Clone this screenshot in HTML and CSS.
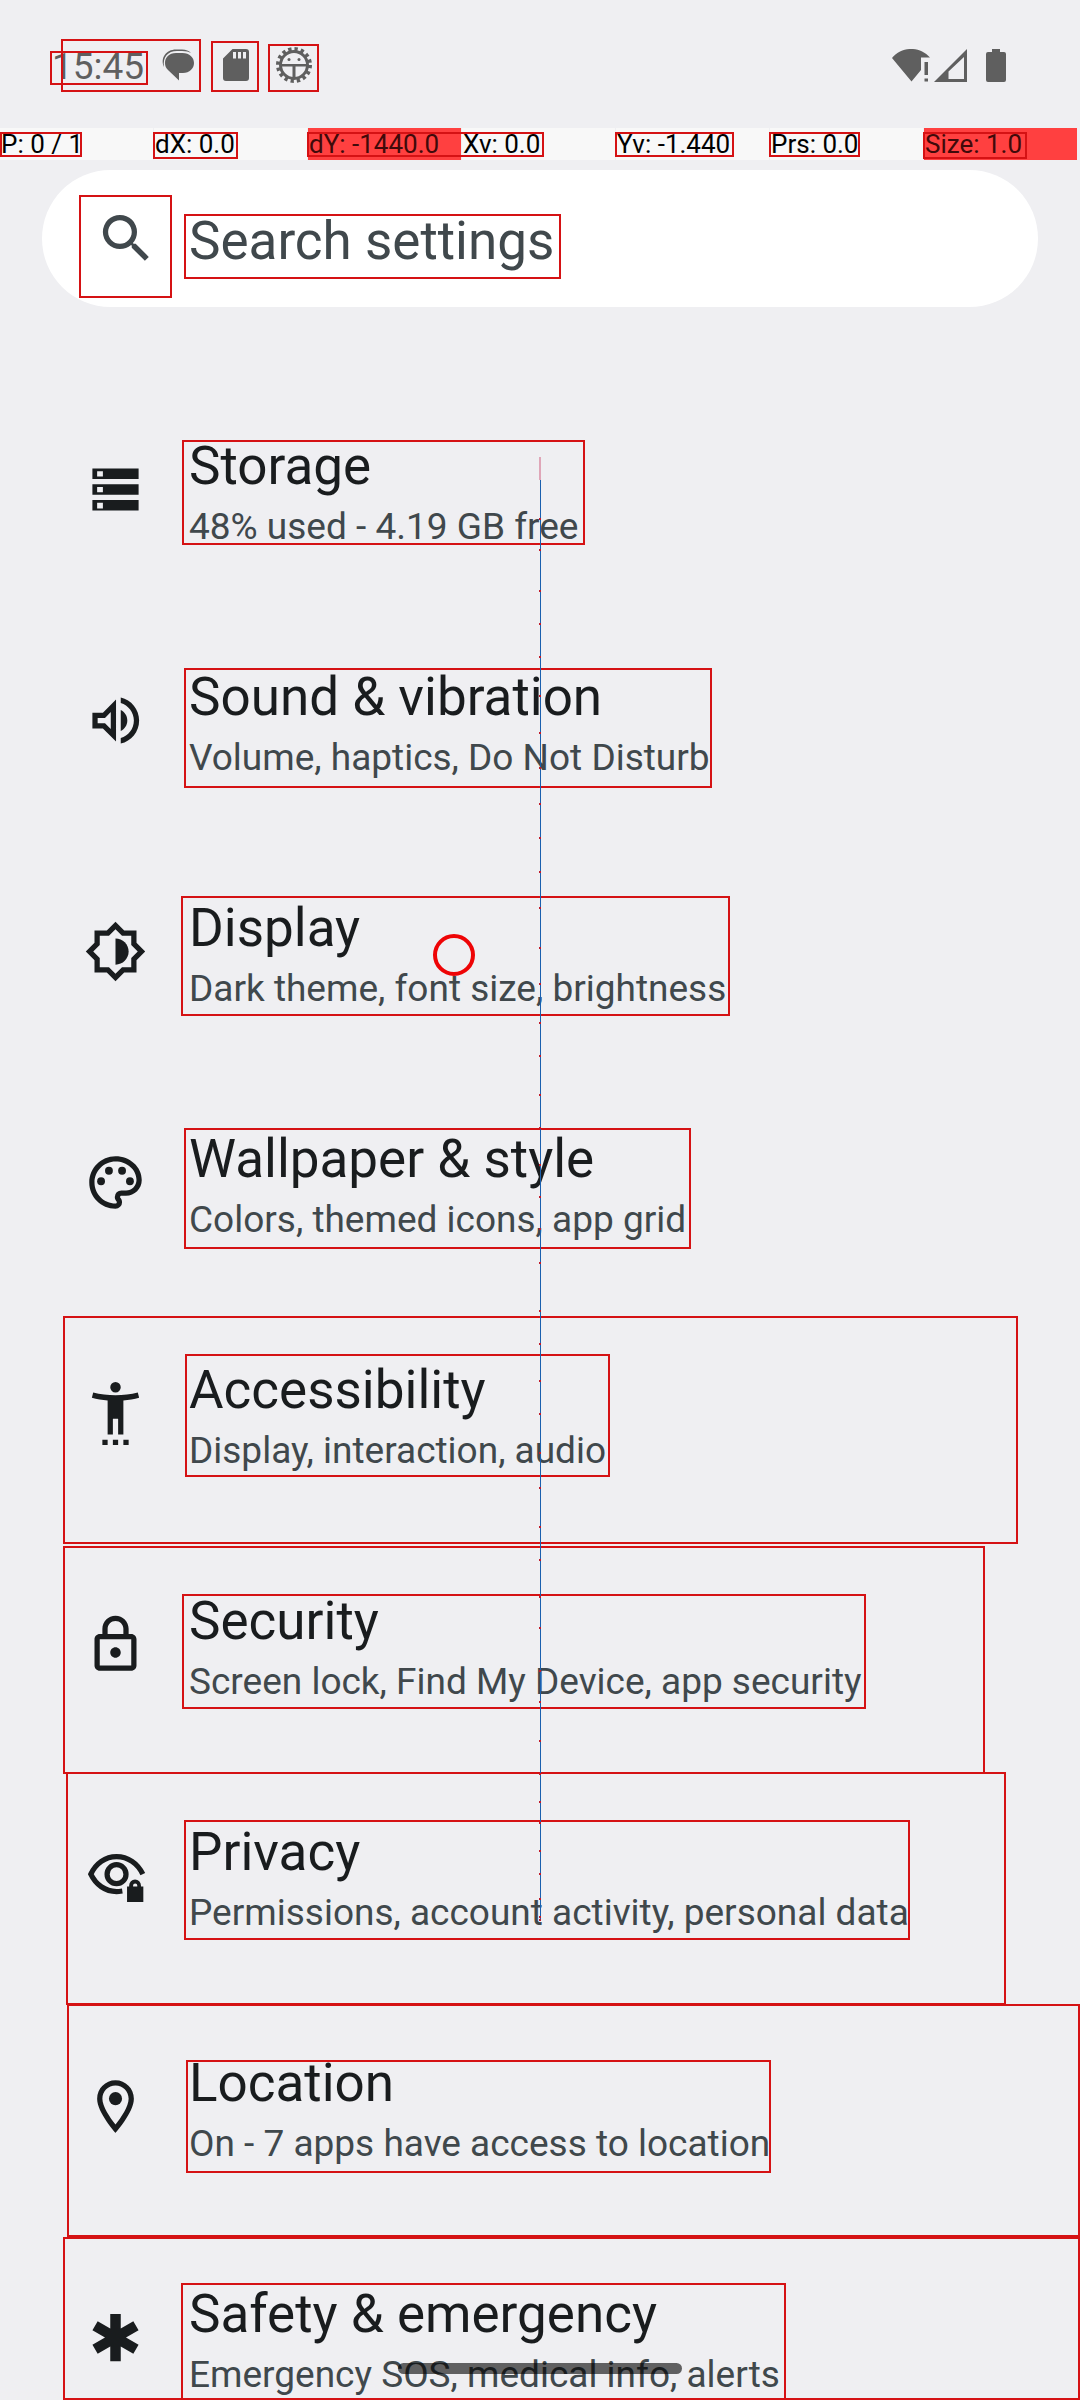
FILE: index.html
```html
<!DOCTYPE html>
<html lang="en">
<head>
<meta charset="utf-8">
<meta name="viewport" content="width=device-width, initial-scale=1">
<title>Settings</title>
<link rel="stylesheet" href="styles.css">
</head>
<body>
<div class="screen">
  <header class="status">
    <div class="status-group status-left">
      <time class="clock">15:45</time>
      <svg class="notice" viewBox="0 0 48 48" aria-hidden="true"><path d="M10 26C6 17 12 8.500 22 8.500h6c4 0 7 1.500 9 3.500-2-1.200-5-2-9-2h-5c-9 0-14.500 6-13 16z"/><path d="M22 12h6.500c7 0 11.500 4.500 11.500 10s-4.500 10-11 10h-4v7.500L14 29c-2-1.800-3-4-3-7 0-5.500 4-10 11-10z"/></svg>
      <svg class="notice" viewBox="0 0 48 48" aria-hidden="true"><path fill-rule="evenodd" d="M20.500 8H34q3 0 3 3v26q0 3-3 3H14q-3 0-3-3V17.500zM21 11v6.500h3V11zm5 0v6.500h3V11zm5 0v6.500h3V11z"/></svg>
      <svg class="notice" viewBox="0 0 48 48" aria-hidden="true"><circle class="teeth" cx="24" cy="24" r="16"/><circle class="ring" cx="24" cy="24" r="13.500"/><path d="M12 23h24v2.500H12zM22.500 24h3v13h-3z"/><circle cx="19" cy="18.500" r="1.500"/><circle cx="29" cy="18.500" r="1.500"/></svg>
    </div>
    <div class="status-group">
      <svg class="wifi" viewBox="0 0 38 33" aria-hidden="true"><path d="M0 9C10-3 28-3 38 8.500H29V21L19.500 32.500zM32.500 13h3.500v13h-3.500zM32.500 29.500h3.500v3h-3.500z"/></svg>
      <svg class="signal" viewBox="0 0 33 33" aria-hidden="true"><path fill-rule="evenodd" d="M0 33 33 0v33zM14.500 30H30V8L14.500 22.500z"/></svg>
      <svg class="battery" viewBox="0 0 20 33" aria-hidden="true"><path d="M6 0h8v3h4q2 0 2 2v26q0 2-2 2H2q-2 0-2-2V5q0-2 2-2h4z"/></svg>
    </div>
  </header>

  <div class="pointer-bar">
    <span>P: 0 / 1</span>
    <span>dX: 0.0</span>
    <span class="hot">dY: -1440.0</span>
    <span>Xv: 0.0</span>
    <span>Yv: -1.440</span>
    <span>Prs: 0.0</span>
    <span class="hot">Size: 1.0</span>
  </div>

  <main class="content">
    <label class="search">
      <svg class="icon" viewBox="0 0 24 24" aria-hidden="true"><path d="M15.500 14h-.79l-.28-.27A6.471 6.471 0 0 0 16 9.500 6.500 6.500 0 1 0 9.500 16c1.610 0 3.090-.59 4.230-1.570l.27.28v.79l5 4.990L20.490 19l-4.990-5zm-6 0C7.010 14 5 11.990 5 9.500S7.010 5 9.500 5 14 7.010 14 9.500 11.990 14 9.500 14z"/></svg>
      <input class="search-input" type="text" placeholder="Search settings" aria-label="Search settings">
    </label>

    <nav class="list">
      <a class="row" href="#storage">
        <svg class="icon" viewBox="0 0 24 24" aria-hidden="true"><path fill-rule="evenodd" d="M3.200 20h17.600v-4H3.200zM5 17h2.200v2.200H5zM3.200 4v4h17.600V4zM7.200 7H5V5h2.200zM3.200 14h17.600v-4H3.200zM5 11h2.200v2H5z"/></svg>
        <span class="text"><span class="title">Storage</span><span class="summary">48% used - 4.19 GB free</span></span>
      </a>
      <a class="row" href="#sound">
        <svg class="icon" viewBox="0 0 24 24" aria-hidden="true"><path fill-rule="evenodd" d="M3.200 9v6h4l5 5V4l-5 5zM10.200 8.800v6.400L8 13H5.200v-2H8z"/><path d="M14 8v8c1.500-.7 2.500-2.200 2.500-4S15.500 8.700 14 8zM14 3.200v2.100c2.900.9 5 3.500 5 6.700s-2.100 5.800-5 6.700v2.100c4-.9 7-4.500 7-8.800s-3-7.900-7-8.800z"/></svg>
        <span class="text"><span class="title">Sound &amp; vibration</span><span class="summary">Volume, haptics, Do Not Disturb</span></span>
      </a>
      <a class="row" href="#display">
        <svg class="icon" viewBox="0 0 24 24" aria-hidden="true"><path fill-rule="evenodd" d="M20 8.690V4h-4.690L12 .69 8.690 4H4v4.690L.69 12 4 15.310V20h4.690L12 23.310 15.310 20H20v-4.690L23.310 12zm-2 5.790V18h-3.520L12 20.480 9.520 18H6v-3.520L3.520 12 6 9.520V6h3.520L12 3.520 14.480 6H18v3.520L20.480 12z"/><path d="M12 7v10c2.760 0 5-2.240 5-5s-2.240-5-5-5z"/></svg>
        <span class="text"><span class="title">Display</span><span class="summary">Dark theme, font size, brightness</span></span>
      </a>
      <a class="row" href="#wallpaper">
        <svg class="icon" viewBox="0 0 24 24" aria-hidden="true"><path d="M12 22C6.490 22 2 17.510 2 12S6.490 2 12 2s10 4.040 10 9c0 3.310-2.690 6-6 6h-1.770c-.28 0-.5.22-.5.5 0 .12.05.23.13.33.41.47.64 1.060.64 1.670A2.500 2.500 0 0 1 12 22zm0-18c-4.410 0-8 3.590-8 8s3.590 8 8 8c.28 0 .5-.22.5-.5a.54.54 0 0 0-.14-.35c-.41-.46-.63-1.050-.63-1.650a2.500 2.500 0 0 1 2.500-2.500H16c2.210 0 4-1.790 4-4 0-3.860-3.590-7-8-7z"/><circle cx="6.500" cy="11.500" r="1.500"/><circle cx="9.500" cy="7.500" r="1.500"/><circle cx="14.500" cy="7.500" r="1.500"/><circle cx="17.500" cy="11.500" r="1.500"/></svg>
        <span class="text"><span class="title">Wallpaper &amp; style</span><span class="summary">Colors, themed icons, app grid</span></span>
      </a>
      <a class="row" href="#accessibility">
        <svg class="icon" viewBox="0 0 24 24" aria-hidden="true"><path d="M20.500 4c-2.610.7-5.670 1-8.500 1s-5.890-.3-8.500-1L3 6c1.860.5 4 .83 6 1v13h2v-6h2v6h2V7c2-.17 4.140-.5 6-1zM12 4a2 2 0 1 0 0-4 2 2 0 0 0 0 4zM7 24h2v-2H7zM11 24h2v-2h-2zM15 24h2v-2h-2z"/></svg>
        <span class="text"><span class="title">Accessibility</span><span class="summary">Display, interaction, audio</span></span>
      </a>
      <a class="row" href="#security">
        <svg class="icon" viewBox="0 0 24 24" aria-hidden="true"><path d="M18 8h-1V6c0-2.760-2.240-5-5-5S7 3.240 7 6v2H6c-1.100 0-2 .9-2 2v10c0 1.100.9 2 2 2h12c1.100 0 2-.9 2-2V10c0-1.100-.9-2-2-2zM9 6c0-1.660 1.340-3 3-3s3 1.340 3 3v2H9zm9 14H6V10h12zm-6-3c1.100 0 2-.9 2-2s-.9-2-2-2-2 .9-2 2 .9 2 2 2z"/></svg>
        <span class="text"><span class="title">Security</span><span class="summary">Screen lock, Find My Device, app security</span></span>
      </a>
      <a class="row" href="#privacy">
        <svg class="icon" viewBox="0 0 24 24" aria-hidden="true"><path class="line" d="M22.400 11.500C20.500 7.400 16.700 4.800 12.400 4.800S4.500 7.400 2.600 11.500c1.900 4 5.500 6.600 9.800 6.600.7 0 1.500-.1 2.200-.2"/><circle class="line" cx="12.400" cy="11.500" r="3.600"/><path fill-rule="evenodd" d="M16.400 16.200h.8v-.4a2.200 2.200 0 0 1 4.500 0v.4h.9v5.900h-6.200zM18.700 16.200h1.600v-.4a.8.800 0 0 0-1.600 0z"/></svg>
        <span class="text"><span class="title">Privacy</span><span class="summary">Permissions, account activity, personal data</span></span>
      </a>
      <a class="row" href="#location">
        <svg class="icon" viewBox="0 0 24 24" aria-hidden="true"><path d="M12 2C8.130 2 5 5.130 5 9c0 5.250 7 13 7 13s7-7.750 7-13c0-3.870-3.130-7-7-7zM7 9c0-2.760 2.240-5 5-5s5 2.240 5 5c0 2.880-2.880 7.190-5 9.880C9.920 16.210 7 11.850 7 9z"/><circle cx="12" cy="9" r="2.500"/></svg>
        <span class="text"><span class="title">Location</span><span class="summary">On - 7 apps have access to location</span></span>
      </a>
      <a class="row" href="#safety">
        <svg class="icon" viewBox="0 0 24 24" aria-hidden="true"><path d="M20.790 9.230l-2-3.460L14 8.540V3h-4v5.540L5.210 5.770l-2 3.460L8 12l-4.790 2.770 2 3.460L10 15.460V21h4v-5.540l4.790 2.770 2-3.460L16 12z"/></svg>
        <span class="text"><span class="title">Safety &amp; emergency</span><span class="summary">Emergency SOS, medical info, alerts</span></span>
      </a>
    </nav>
  </main>

  <div class="home-handle"></div>

  <svg class="overlay" aria-hidden="true">
    <g class="bounds">
      <rect x="51" y="52" width="96" height="32"/>
      <rect x="62" y="40" width="138" height="51"/>
      <rect x="212" y="42" width="46" height="49"/>
      <rect x="269" y="45" width="49" height="46"/>
      <rect x="1" y="133" width="80" height="23"/>
      <rect x="154" y="133" width="83" height="25"/>
      <rect x="308" y="133" width="235" height="23"/>
      <rect x="616" y="133" width="117" height="23"/>
      <rect x="770" y="133" width="89" height="23"/>
      <rect x="924" y="133" width="102" height="25"/>
      <rect x="80" y="196" width="91" height="101"/>
      <rect x="185" y="215" width="375" height="63"/>
      <rect x="183" y="441" width="401" height="103"/>
      <rect x="185" y="669" width="526" height="118"/>
      <rect x="182" y="897" width="547" height="118"/>
      <rect x="185" y="1129" width="505" height="119"/>
      <rect x="64" y="1317" width="953" height="226"/>
      <rect x="186" y="1355" width="423" height="121"/>
      <rect x="64" y="1547" width="920" height="226"/>
      <rect x="183" y="1595" width="682" height="113"/>
      <rect x="67" y="1773" width="938" height="231"/>
      <rect x="185" y="1821" width="724" height="118"/>
      <rect x="68" y="2005" width="1011" height="231"/>
      <rect x="187" y="2061" width="583" height="111"/>
      <rect x="64" y="2238" width="1015" height="161"/>
      <rect x="182" y="2284" width="603" height="115"/>
    </g>
    <path class="trail-start" d="M540 457v23"/>
    <path class="trail" d="M540.500 480v1440"/>
    <path class="trail-dots" d="M539 519h2M539 550h2M539 591h2M539 624h2M539 657h2M539 696h2M539 733h2M539 768h2M539 804h2M539 838h2M539 872h2M539 908h2M539 948h2M539 984h2M539 1023h2M539 1056h2M539 1095h2M539 1128h2M539 1165h2M539 1197h2M539 1229h2M539 1263h2M539 1311h2M539 1344h2M539 1381h2M539 1414h2M539 1453h2M539 1488h2M539 1527h2M539 1560h2M539 1597h2M539 1628h2M539 1671h2M539 1702h2M539 1741h2M539 1774h2M539 1802h2M539 1823h2M539 1851h2M539 1874h2M539 1899h2M539 1917h2M539 1920h2"/>
    <circle class="touch" cx="454" cy="955" r="19"/>
  </svg>
</div>
</body>
</html>
```
FILE: styles.css
```css
* {
  box-sizing: border-box;
}

body {
  margin: 0;
  background: #efeff2;
  color: #191c1e;
  font-family: Roboto, "Noto Sans", sans-serif;
}

.screen {
  position: relative;
  display: flex;
  flex-direction: column;
  height: 100vh;
  overflow: hidden;
}

/* Status bar */
.status {
  display: flex;
  flex: none;
  align-items: center;
  justify-content: space-between;
  height: 128px;
  padding: 2px 74px 0 52px;
  color: #5f5f5f;
  fill: #5f5f5f;
}

.status-group {
  display: flex;
  align-items: center;
}

.status-left {
  gap: 10px;
}

.clock {
  padding-top: 4px;
  font-size: 37px;
  line-height: 44px;
}

.notice {
  width: 48px;
  height: 48px;
}

.teeth,
.ring {
  fill: none;
  stroke: #5f5f5f;
  stroke-width: 3px;
}

.teeth {
  stroke-width: 4px;
  stroke-dasharray: 3.283 3;
}

.wifi {
  width: 38px;
  height: 33px;
  margin-right: 4px;
}

.signal {
  width: 33px;
  height: 33px;
  margin-right: 19px;
}

.battery {
  width: 20px;
  height: 33px;
}

/* Pointer readout */
.pointer-bar {
  display: grid;
  flex: none;
  grid-template-columns: repeat(7, 1fr);
  gap: 1px;
  padding-right: 3px;
  color: #000;
  font-size: 26px;
  line-height: 32px;
  white-space: nowrap;
}

.pointer-bar span {
  padding-left: 1px;
  background: #f8f8f8;
}

.pointer-bar .hot {
  background: #ff4040;
  color: #400a0a;
}

/* Search and list */
.content {
  flex: 1;
  min-height: 0;
  padding-top: 10px;
  overflow: hidden;
}

.icon {
  flex: none;
  width: 63px;
  height: 63px;
  fill: currentColor;
}

.search {
  display: flex;
  align-items: center;
  gap: 31px;
  height: 137px;
  margin: 0 42px 67px;
  padding: 0 53px;
  border-radius: 69px;
  background: #fff;
  color: #40484c;
}

.search-input {
  flex: 1;
  min-width: 0;
  padding: 4px 0 0;
  border: 0;
  outline: 0;
  background: transparent;
  color: inherit;
  font: inherit;
  font-size: 53px;
}

.search-input::placeholder {
  color: inherit;
  opacity: 1;
}

.row {
  display: flex;
  align-items: center;
  gap: 42px;
  height: 231px;
  padding: 0 84px;
  color: inherit;
  text-decoration: none;
}

.text {
  display: flex;
  flex-direction: column;
  padding-top: 4px;
  white-space: nowrap;
}

.title {
  font-size: 53px;
  line-height: 70px;
}

.summary {
  color: #40484c;
  font-size: 37px;
  line-height: 51px;
}

.icon .line {
  fill: none;
  stroke: currentColor;
  stroke-width: 2px;
}

.home-handle {
  position: absolute;
  bottom: 26px;
  left: 50%;
  width: 284px;
  height: 11px;
  margin-left: -142px;
  border-radius: 6px;
  background: rgba(0, 0, 0, 0.6);
}

/* Layout bounds and pointer trail, drawn over the screen */
.overlay {
  position: absolute;
  inset: 0;
  width: 100%;
  height: 100%;
  pointer-events: none;
}

.bounds rect {
  fill: none;
  stroke: #d51214;
  stroke-width: 2px;
}

.trail-start {
  stroke: #dfa6b8;
  stroke-width: 2px;
}

.trail {
  stroke: #1a5fae;
  stroke-width: 1px;
}

.trail-dots {
  stroke: #c01c2c;
  stroke-width: 2px;
}

.touch {
  fill: none;
  stroke: #ee0406;
  stroke-width: 4px;
}
```
